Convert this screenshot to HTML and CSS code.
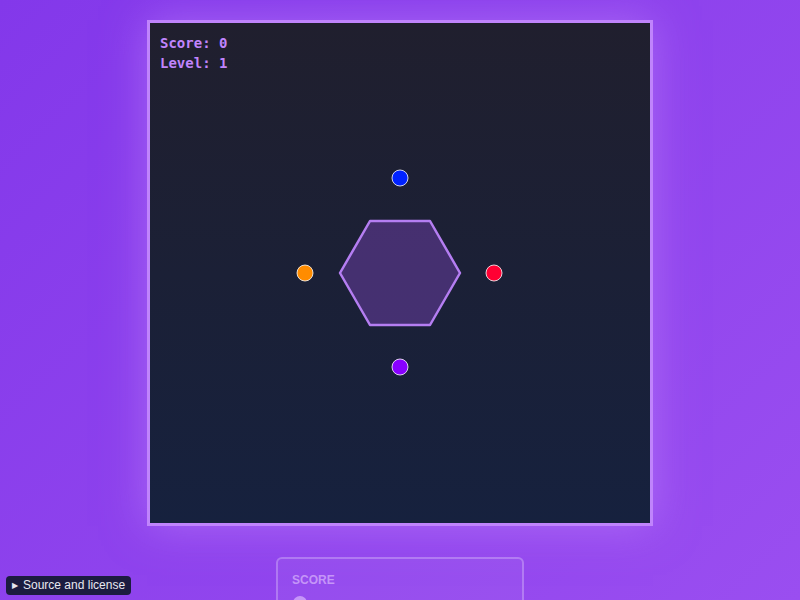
FILE: index.html
```html
<!DOCTYPE html>
<html lang="en">
<head>
<meta charset="utf-8">
<title>Hex Game</title>
<link rel="stylesheet" href="styles.css">
</head>
<body>
<main class="page">
  <div class="board">
    <svg class="scene" width="500" height="500" viewBox="0 0 500 500" xmlns="http://www.w3.org/2000/svg">
      <defs>
        <linearGradient id="bg" x1="0" y1="0" x2="0" y2="1">
          <stop offset="0" stop-color="#201f2e"/>
          <stop offset="1" stop-color="#16213e"/>
        </linearGradient>
      </defs>
      <rect width="500" height="500" fill="url(#bg)"/>
      <text class="hud" x="10" y="25">Score: 0</text>
      <text class="hud" x="10" y="45">Level: 1</text>
      <polygon points="190,250 220,198 280,198 310,250 280,302 220,302" fill="rgba(168,85,247,0.3)" stroke="#b57ef2" stroke-width="2.5" stroke-linejoin="round"/>
      <circle cx="250" cy="155" r="8" fill="#0022ff" stroke="#ffffff" stroke-opacity="0.8" stroke-width="1"/>
      <circle cx="344" cy="250" r="8" fill="#ff0033" stroke="#ffffff" stroke-opacity="0.8" stroke-width="1"/>
      <circle cx="155" cy="250" r="8" fill="#ff8c00" stroke="#ffffff" stroke-opacity="0.8" stroke-width="1"/>
      <circle cx="250" cy="344" r="8" fill="#8800ff" stroke="#ffffff" stroke-opacity="0.8" stroke-width="1"/>
    </svg>
  </div>
  <section class="panel">
    <div class="panel-label">SCORE</div>
    <div class="panel-dot"></div>
  </section>
</main>
<div class="source"><span class="tri">&#9654;</span>Source and license</div>
</body>
</html>
```
FILE: styles.css
```css
html, body {
  margin: 0;
  padding: 0;
  height: 100%;
  overflow: hidden;
}
body {
  background: linear-gradient(135deg, #8338ea 0%, #9a4ef0 100%);
  font-family: "Liberation Sans", Arial, sans-serif;
}
.page {
  display: flex;
  flex-direction: column;
  align-items: center;
  padding-top: 20px;
  gap: 31px;
}
.board {
  width: 500px;
  height: 500px;
  border: 3px solid #c084fc;
  box-shadow: 0 0 40px rgba(192, 132, 252, 0.55);
  display: flex;
}
.scene {
  display: block;
}
.hud {
  font-family: "DejaVu Sans Mono", monospace;
  font-weight: bold;
  font-size: 14px;
  fill: #c084fc;
}
.panel {
  width: 216px;
  height: 120px;
  padding: 14px 14px;
  border: 2px solid rgba(255, 255, 255, 0.25);
  border-radius: 6px;
  background: rgba(255, 255, 255, 0.04);
}
.panel-label {
  font-weight: bold;
  font-size: 12px;
  color: rgba(230, 200, 255, 0.6);
}
.panel-dot {
  margin-top: 9px;
  margin-left: 1px;
  width: 14px;
  height: 14px;
  border-radius: 50%;
  background: rgba(230, 200, 255, 0.6);
}
.source {
  position: fixed;
  left: 6px;
  bottom: 5px;
  display: flex;
  align-items: center;
  gap: 5px;
  background: #1c1c40;
  color: #e8e8f0;
  font-size: 12px;
  padding: 3px 6px 3px 6px;
  border-radius: 4px;
  line-height: 13px;
}
.tri {
  font-size: 8px;
  line-height: 13px;
}
```
